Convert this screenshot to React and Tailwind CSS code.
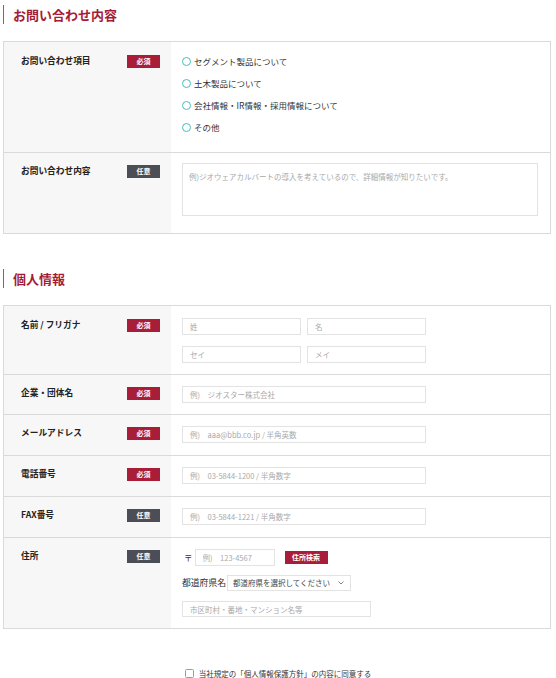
import React from "react";

const Badge = ({ req }) => (
  <span
    className={
      "flex h-[13px] w-[33px] shrink-0 items-center justify-center text-[7px] font-bold leading-none text-white " +
      (req ? "bg-[#a81e38]" : "bg-[#4b4e56]")
    }
  >
    {req ? "必須" : "任意"}
  </span>
);

const Label = ({ text, req, h = "h-[13px]" }) => (
  <div className={"flex items-center justify-between " + h}>
    <span className="text-[8.7px] font-bold leading-none text-[#222]">{text}</span>
    <Badge req={req} />
  </div>
);

const Input = ({ ph, w = "w-[244px]", h = "h-[17px]" }) => (
  <input
    placeholder={ph}
    className={
      "block border border-[#e3e3e3] bg-white pl-[7px] text-[7.5px] leading-none text-[#333] outline-none placeholder:text-[#a9a9a9] " +
      w +
      " " +
      h
    }
  />
);

const Heading = ({ children }) => (
  <div className="ml-[3px] flex h-[19px] items-center border-l-[1.5px] border-[#c04a5c] pl-[9px] text-[13px] font-bold leading-none text-[#a51c36]">
    {children}
  </div>
);

const Radio = ({ children }) => (
  <div className="flex h-[22px] items-center">
    <span className="h-[9px] w-[9px] shrink-0 rounded-full border-[1.5px] border-[#45bfbf]"></span>
    <span className="ml-[3px] text-[8.5px] leading-none text-[#333]">{children}</span>
  </div>
);

const Row = ({ label, req, leftPt = "pt-[12px]", rightCls = "pt-[11px] pb-[12px]", first, children }) => (
  <div className={"flex " + (first ? "" : "border-t border-[#dadada]")}>
    <div className={"w-[167px] shrink-0 bg-[#f7f7f7] pl-[17px] pr-[11px] " + leftPt}>
      <Label text={label} req={req} />
    </div>
    <div className={"flex-1 bg-white pl-[11px] " + rightCls}>{children}</div>
  </div>
);

export default function App() {
  return (
    <div
      className="min-h-[678px] w-[556px] bg-white pt-[5px] text-[#333]"
      style={{ fontFamily: '"Noto Sans CJK JP", "Noto Sans", sans-serif' }}
    >
      <Heading>お問い合わせ内容</Heading>

      <div className="ml-[3px] mt-[17px] w-[548px] border border-[#dadada]">
        <div className="flex">
          <div className="w-[167px] shrink-0 bg-[#f7f7f7] pl-[17px] pr-[11px] pt-[8px]">
            <Label text="お問い合わせ項目" req h="h-[22px]" />
          </div>
          <div className="flex-1 bg-white pb-[14px] pl-[11px] pt-[8px]">
            <Radio>セグメント製品について</Radio>
            <Radio>土木製品について</Radio>
            <Radio>会社情報・IR情報・採用情報について</Radio>
            <Radio>その他</Radio>
          </div>
        </div>
        <Row label="お問い合わせ内容" req={false} rightCls="pt-[10px] pb-[17px]">
          <textarea
            placeholder="例)ジオウェアカルバートの導入を考えているので、詳細情報が知りたいです。"
            className="block h-[53px] w-[356px] resize-none border border-[#e3e3e3] bg-white px-[6px] pt-[9px] text-[7.5px] leading-none outline-none placeholder:text-[#a9a9a9]"
          />
        </Row>
      </div>

      <div className="mt-[35px]">
        <Heading>個人情報</Heading>
      </div>

      <div className="ml-[3px] mt-[17px] w-[548px] border border-[#dadada]">
        <Row label="名前 / フリガナ" req first leftPt="pt-[13px]" rightCls="pt-[12px] pb-[11px]">
          <div className="flex gap-[6px]">
            <Input ph="姓" w="w-[119px]" />
            <Input ph="名" w="w-[119px]" />
          </div>
          <div className="mt-[11px] flex gap-[6px]">
            <Input ph="セイ" w="w-[119px]" />
            <Input ph="メイ" w="w-[119px]" />
          </div>
        </Row>
        <Row label="企業・団体名" req rightCls="pt-[11px] pb-[11px]">
          <Input ph="例)　ジオスター株式会社" />
        </Row>
        <Row label="メールアドレス" req>
          <Input ph="例)　aaa@bbb.co.jp / 半角英数" />
        </Row>
        <Row label="電話番号" req>
          <Input ph="例)　03-5844-1200 / 半角数字" />
        </Row>
        <Row label="FAX番号" req={false}>
          <Input ph="例)　03-5844-1221 / 半角数字" />
        </Row>
        <Row label="住所" req={false} rightCls="pt-[11px] pb-[11px]">
          <div className="flex items-center">
            <span className="ml-[2px] text-[8.5px] leading-none text-[#333]">〒</span>
            <div className="ml-[2px]">
              <Input ph="例)　123-4567" w="w-[80px]" />
            </div>
            <button className="ml-[10px] flex h-[13px] w-[43px] items-center justify-center bg-[#a81e38] text-[7px] font-bold leading-none text-white">
              住所検索
            </button>
          </div>
          <div className="mt-[9px] flex items-center">
            <span className="text-[8.8px] leading-none text-[#333]">都道府県名</span>
            <div className="ml-[1px] flex h-[16px] w-[124px] items-center justify-between border border-[#e3e3e3] bg-white pl-[5px] pr-[6px]">
              <span className="text-[7.5px] leading-none text-[#444]">都道府県を選択してください</span>
              <svg width="6" height="4" viewBox="0 0 6 4" fill="none">
                <path d="M0.5 0.5 L3 3 L5.5 0.5" stroke="#777" strokeWidth="0.9" />
              </svg>
            </div>
          </div>
          <div className="mt-[10px]">
            <Input ph="市区町村・番地・マンション名等" w="w-[189px]" h="h-[16px]" />
          </div>
        </Row>
      </div>

      <div className="mt-[40px] flex items-center justify-center">
        <span className="h-[9px] w-[9px] rounded-[1.5px] border-[1.5px] border-[#45bfbf]"></span>
        <span className="ml-[5px] text-[7.5px] leading-none text-[#333]">
          当社規定の「個人情報保護方針」の内容に同意する
        </span>
      </div>
    </div>
  );
}
